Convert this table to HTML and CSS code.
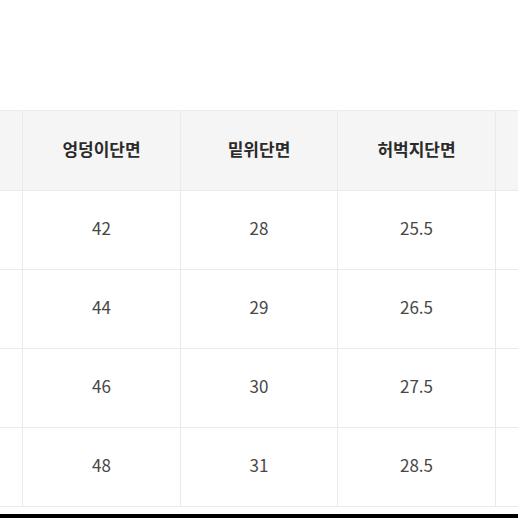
FILE: index.html
```html
<!DOCTYPE html>
<html lang="ko">
<head>
<meta charset="utf-8">
<link rel="stylesheet" href="styles.css">
</head>
<body>
<div class="page">
  <div class="spacer"></div>
  <div class="table">
    <div class="row head">
      <div class="cell"></div>
      <div class="cell">엉덩이단면</div>
      <div class="cell">밑위단면</div>
      <div class="cell">허벅지단면</div>
      <div class="cell"></div>
    </div>
    <div class="row">
      <div class="cell"></div><div class="cell">42</div><div class="cell">28</div><div class="cell">25.5</div><div class="cell"></div>
    </div>
    <div class="row">
      <div class="cell"></div><div class="cell">44</div><div class="cell">29</div><div class="cell">26.5</div><div class="cell"></div>
    </div>
    <div class="row">
      <div class="cell"></div><div class="cell">46</div><div class="cell">30</div><div class="cell">27.5</div><div class="cell"></div>
    </div>
    <div class="row">
      <div class="cell"></div><div class="cell">48</div><div class="cell">31</div><div class="cell">28.5</div><div class="cell"></div>
    </div>
  </div>
  <div class="fill"></div>
  <div class="bar"></div>
</div>
</body>
</html>
```

FILE: styles.css
```css
html, body {
  margin: 0;
  padding: 0;
  background: #ffffff;
}
.page {
  width: 518px;
  height: 518px;
  overflow: hidden;
  display: flex;
  flex-direction: column;
  font-family: "Noto Sans CJK KR", "Noto Sans", sans-serif;
}
.spacer {
  height: 110px;
  flex: none;
}
.table {
  flex: none;
  margin-left: -135px;
  border-top: 1px solid #ececec;
}
.row {
  display: grid;
  grid-template-columns: 158px 158px 157px 158px 158px;
  height: 78px;
  border-bottom: 1px solid #eaeaea;
}
.row.head {
  height: 79px;
  background: #f5f5f5;
}
.cell {
  display: flex;
  align-items: center;
  justify-content: center;
  border-right: 1px solid #eaeaea;
  font-size: 17px;
  color: #474747;
  padding-bottom: 5px;
}
.head .cell {
  font-weight: 700;
  color: #2a2a2a;
  font-size: 17px;
  padding-bottom: 4px;
}
.fill {
  flex: 1;
}
.bar {
  height: 4px;
  background: #000000;
  flex: none;
}
```
